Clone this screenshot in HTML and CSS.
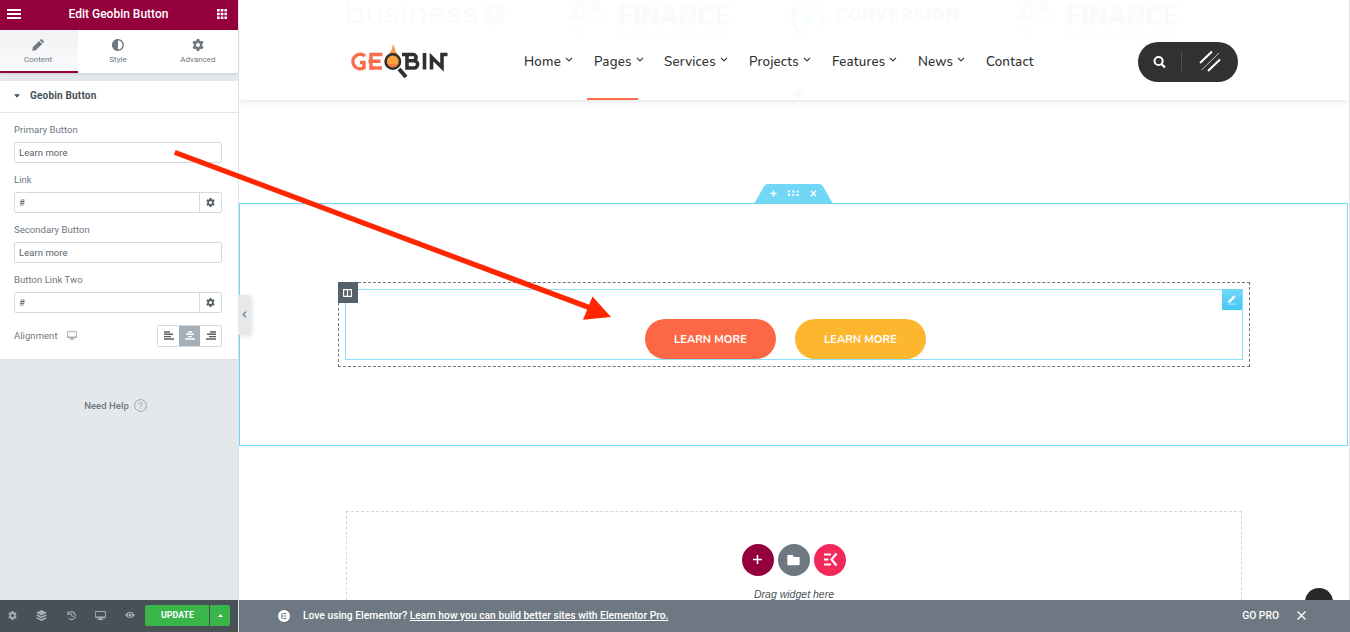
FILE: index.html
```html
<!DOCTYPE html>
<html lang="en">
<head>
<meta charset="utf-8">
<title>Edit Geobin Button</title>
<link rel="stylesheet" href="styles.css">
</head>
<body>
<svg width="0" height="0" class="defs">
  <symbol id="gear" viewBox="0 0 16 16"><path fill-rule="evenodd" d="M6.3 0h3.4l.5 2.3 1.2.7 2.3-.8 1.7 3-1.8 1.6v2.4l1.8 1.6-1.7 3-2.3-.8-1.2.7-.5 2.3H6.300l-.5-2.300-1.200-.7-2.300.8-1.700-3 1.800-1.600V6.800L.6 5.200l1.700-3 2.300.8 1.200-.7zM8 5.300a2.700 2.700 0 1 0 0 5.400 2.700 2.700 0 0 0 0-5.400z"/></symbol>
  <symbol id="monitor" viewBox="0 0 12 10"><path fill-rule="evenodd" d="M1 0h10a1 1 0 0 1 1 1v6a1 1 0 0 1-1 1H7.500l.3 1H9v1H3V9h1.200l.3-1H1a1 1 0 0 1-1-1V1a1 1 0 0 1 1-1zM1 1v5.200h10V1z"/></symbol>
  <symbol id="chev" viewBox="0 0 8 5"><path d="M1 .8 4 3.900 7 .8" fill="none" stroke="#333" stroke-width="1.100"/></symbol>
  <symbol id="disc" viewBox="0 0 36 40"><path d="M1 19Q1 6 10 0h16q7 5 9 13-6-4-9 0-8 5-13-1 1-6 11-6-14-3-16 7 0 4 5 4h21l1 3z" fill="#fafdfc"/><path d="M3 27h10q-1 7 3 12Q6 37 3 27z" fill="#fefdfb"/></symbol>
</svg>
<aside class="panel">
  <header class="panel-head">
    <svg width="14" height="10" viewBox="0 0 14 10"><path d="M0 1h14M0 5h14M0 9h14" stroke="#fff" stroke-width="1.800"/></svg>
    <span class="panel-title">Edit Geobin Button</span>
    <svg width="10" height="10" viewBox="0 0 10 10"><path d="M0 1.300h10M0 5h10M0 8.700h10" stroke="#fff" stroke-width="2.500" stroke-dasharray="2.700 1"/></svg>
  </header>
  <nav class="tabs">
    <div class="tab tab-on"><svg width="12" height="12" viewBox="0 0 16 16"><path d="M1 11 9.500 2.500l4 4L5 15l-4.500.500zM10.500 1.500l1-1q1-.8 2 0L15.500 2.500q.8 1 0 2l-1 1z"/></svg><span>Content</span></div>
    <div class="tab"><svg width="12" height="12" viewBox="0 0 12 12"><circle cx="6" cy="6" r="5.200" fill="none" stroke="#6d7882" stroke-width="1.400"/><path d="M6 0a6 6 0 0 0 0 12z"/></svg><span>Style</span></div>
    <div class="tab"><svg width="12" height="12"><use href="#gear"/></svg><span>Advanced</span></div>
  </nav>
  <section class="controls">
    <h2 class="section-title"><svg width="6" height="4" viewBox="0 0 6 4"><path d="M0 .3h6L3 3.800z" fill="#495157"/></svg>Geobin Button</h2>
    <div class="fields">
      <label class="label">Primary Button</label>
      <div class="input">Learn more</div>
      <label class="label">Link</label>
      <div class="input"><span class="grow">#</span><span class="addon"><svg width="9" height="9"><use href="#gear"/></svg></span></div>
      <label class="label">Secondary Button</label>
      <div class="input">Learn more</div>
      <label class="label">Button Link Two</label>
      <div class="input"><span class="grow">#</span><span class="addon"><svg width="9" height="9"><use href="#gear"/></svg></span></div>
      <div class="align-row">
        <span class="align-label">Alignment</span>
        <svg class="device" width="10" height="9"><use href="#monitor"/></svg>
        <div class="choices">
          <span class="choice"><svg width="10" height="9" viewBox="0 0 10 9"><path d="M0 1h6M0 3.300h9M0 5.600h7M0 8h10" stroke="#556068" stroke-width="1.400"/></svg></span>
          <span class="choice choice-on"><svg width="10" height="9" viewBox="0 0 10 9"><path d="M3 1h4M1 3.300h8M3 5.600h4M0 8h10" stroke="#fff" stroke-width="1.400"/></svg></span>
          <span class="choice"><svg width="10" height="9" viewBox="0 0 10 9"><path d="M4 1h6M1 3.300h9M3 5.600h7M0 8h10" stroke="#556068" stroke-width="1.400"/></svg></span>
        </div>
      </div>
    </div>
  </section>
  <div class="help">Need Help<svg width="13" height="13" viewBox="0 0 13 13"><circle cx="6.500" cy="6.500" r="5.900" fill="none" stroke="#9ba4ac"/><path d="M4.800 5.200Q4.900 3.500 6.500 3.500t1.700 1.500Q8.200 6 6.500 6.800v1" fill="none" stroke="#9ba4ac"/><path d="M6 8.800h1v1H6z" fill="#9ba4ac"/></svg></div>
  <footer class="panel-foot">
    <svg width="9" height="9"><use href="#gear"/></svg>
    <svg width="11" height="11" viewBox="0 0 12 12"><path d="m6 0 6 3-6 3-6-3zM1.500 5 6 7.200 10.500 5 12 6 6 9 0 6zM1.500 8 6 10.200 10.500 8 12 9l-6 3-6-3z"/></svg>
    <svg width="9" height="9" viewBox="0 0 10 10"><path d="M1.700 2.300A4.300 4.300 0 1 1 2 8.300M1 .5v3h3M5.200 2.800v2.600L7 6.500" fill="none" stroke="#a4afb7" stroke-width="1.200"/></svg>
    <svg width="11" height="9"><use href="#monitor"/></svg>
    <svg width="10" height="8" viewBox="0 0 12 8"><path fill-rule="evenodd" d="M0 4q6-8 12 0-6 8-12 0zm3.200 0a2.800 2.800 0 1 0 5.600 0 2.800 2.800 0 0 0-5.600 0z"/><circle cx="6" cy="4" r="1.800"/></svg>
    <span class="update">UPDATE</span>
    <span class="update-more"><svg width="5" height="3" viewBox="0 0 5 3"><path d="M0 3 2.500 0 5 3z" fill="#fff"/></svg></span>
  </footer>
</aside>

<main class="preview">
  <div class="canvas">
    <header class="site-head">
      <svg class="ghosts" width="1111" height="100" viewBox="239 0 1111 100">
        <g fill="#fafafb">
          <text x="345" y="23" font-size="31" font-family="Nunito, sans-serif" textLength="134" lengthAdjust="spacingAndGlyphs">business</text>
          <circle cx="494" cy="14" r="11" fill="#f9fcfd"/><path d="M494 8v12M488 14h12" stroke="#fff" stroke-width="3"/>
          <g font-weight="700" font-family="Roboto, sans-serif"><text x="618" y="25" font-size="28" textLength="112" lengthAdjust="spacingAndGlyphs">FINANCE</text><text x="1066" y="25" font-size="28" textLength="112" lengthAdjust="spacingAndGlyphs">FINANCE</text></g>
          <text x="835" y="21" font-size="18" font-weight="700" font-family="Roboto, sans-serif" textLength="124">CONVERSION</text>
          <g fill="#fbfdfd" font-size="7.500" font-weight="700" font-family="Roboto, sans-serif"><text x="618" y="37.500" textLength="111" lengthAdjust="spacingAndGlyphs">SLOGAN GOES HERE</text><text x="1066" y="37.500" textLength="111" lengthAdjust="spacingAndGlyphs">SLOGAN GOES HERE</text></g>
        </g>
        <use href="#disc" x="569" y="0" width="36" height="40"/><use href="#disc" x="1017" y="0" width="36" height="40"/>
        <path d="M791 9q-4 20 16 30-9-10-12-20 1-8 6-11-6-2-10 1z" fill="#fafcfc"/><path d="M795 4q14-9 28 4 6 12-2 22 2-16-8-23-8-4-18-3z" fill="#fefdfb"/><circle cx="808" cy="19" r="6" fill="#fafdfd"/>
        <circle cx="799" cy="94" r="4.500" fill="#f9f9fa"/>
      </svg>
      <svg class="logo" width="99" height="36" viewBox="350 44 99 36">
        <g fill="none" stroke-width="3.400">
          <path d="M365 56a7.300 7.300 0 1 0-1 11.800v-5.300h-4" stroke="#fb6c4b"/>
          <path d="M382.500 54.500H371v13.500h11M368.500 61.200h12" stroke="#fb6c4b"/>
          <path d="M402 54.500h11a3 3 0 0 1 0 6.200H407h7a3.400 3.400 0 0 1 0 7.300H407V54M424.500 53v16.500M431.500 69.500V57l10.500 10.500V54.500h5.500" stroke="#303030" stroke-width="3.600"/>
        </g>
        <path d="M388 57c1-5 5-6 4.500-12.500 3 3 2 5 4 8l2 4z" fill="#fa9a48"/>
        <circle cx="392.800" cy="61.500" r="7.200" fill="#fba33d" stroke="#303030" stroke-width="2.600"/><path d="M388 64a5.500 5.500 0 0 0 10 0z" fill="#fb7a3c"/>
        <path d="m399 69 7 8" stroke="#303030" stroke-width="4"/>
      </svg>
      <nav class="menu">
        <a class="m-home"><span>Home</span><svg width="8" height="5"><use href="#chev"/></svg></a>
        <a class="m-pages current"><span>Pages</span><svg width="8" height="5"><use href="#chev"/></svg></a>
        <a class="m-services"><span>Services</span><svg width="8" height="5"><use href="#chev"/></svg></a>
        <a class="m-projects"><span>Projects</span><svg width="8" height="5"><use href="#chev"/></svg></a>
        <a class="m-features"><span>Features</span><svg width="8" height="5"><use href="#chev"/></svg></a>
        <a class="m-news"><span>News</span><svg width="8" height="5"><use href="#chev"/></svg></a>
        <a class="m-contact"><span>Contact</span></a>
      </nav>
      <div class="pill">
        <svg width="100" height="40" viewBox="0 0 100 40"><circle cx="20.600" cy="19" r="4.100" fill="none" stroke="#fff" stroke-width="2"/><path d="m23.500 22 3.500 3.500" stroke="#fff" stroke-width="2.200"/><path d="M43.500 9v20" stroke="#53514f"/><g stroke="#fff"><path d="M62 21 74 9.500M70 29l12-11.500" stroke-width="2"/><path d="M63.500 28 81 11" stroke-width="1" stroke="#c5c4c2"/></g></svg>
      </div>
    </header>

    <section class="el-section">
      <div class="handle"><svg width="79" height="20" viewBox="0 0 79 20"><path d="M9 4q2-4 5-4h51q3 0 5 4l9 16H0z" fill="#71d7f7"/><g stroke="#fff" stroke-width="1.300" fill="none"><path d="M16.500 9.500h6M19.500 6.500v6M57 6.700l5 5.600M62 6.700l-5 5.600"/><path d="M34 7.500h11M34 11h11" stroke-width="2" stroke-dasharray="2 2.300"/></g></svg></div>
      <div class="column">
        <div class="widget">
          <span class="edit-icon"><svg width="10" height="10" viewBox="0 0 10 10"><path d="m1 8 .5-2.200 5-5L8.200 2.500l-5 5zM7 .5l1-.3L9 1.200 8.500 2z" fill="#fff"/><path d="M1 9h8" stroke="#a8e7fb"/></svg></span>
          <a class="btn btn-primary">LEARN MORE</a><a class="btn btn-second">LEARN MORE</a>
        </div>
        <span class="col-icon"><svg width="9" height="8" viewBox="0 0 9 8"><path d="M.6.600h7.800v6.800H.6zM4.500.6v6.800" fill="none" stroke="#fff" stroke-width="1.100"/></svg></span>
      </div>
    </section>

    <section class="dropzone">
      <div class="adders">
        <span class="adder add"><svg width="32" height="32"><path d="M11 15.500h9M15.500 11v9" stroke="#fff" stroke-width="1.600"/></svg></span>
        <span class="adder folder"><svg width="32" height="32"><path d="M10.500 11h4l1.500 2h4.500q1.200 0 1.200 1.200V20q0 1.200-1.200 1.200h-10Q9.300 21.200 9.300 20v-7.800Q9.300 11 10.500 11z" fill="#fff"/></svg></span>
        <span class="adder kit"><svg width="32" height="32"><path d="M10 10.500h7M10 15.500h4.500M10 20.500h7M22.500 9.500 17.500 15.500l5 6" fill="none" stroke="#fff" stroke-width="2.200"/></svg></span>
      </div>
      <div class="drag">Drag widget here</div>
    </section>
    <span class="to-top"></span>
  </div>
  <footer class="promo">
    <svg width="12" height="12" viewBox="0 0 12 12"><circle cx="6" cy="6" r="6" fill="#fff"/><path d="M4 3v6M5.500 3.500h3M5.500 6h3M5.500 8.500h3" stroke="#6d7882" stroke-width="1.100"/></svg>
    <span class="promo-text">Love using Elementor? <u>Learn how you can build better sites with Elementor Pro.</u></span>
    <span class="gopro">GO PRO</span>
    <svg class="close" width="9" height="9" viewBox="0 0 9 9"><path d="m.5.500 8 8M8.500.500l-8 8" stroke="#fff" stroke-width="1.300"/></svg>
  </footer>
</main>
<span class="collapse"><svg width="5" height="7" viewBox="0 0 5 7"><path d="M4 .7 1.200 3.500 4 6.300" fill="none" stroke="#6d7882" stroke-width="1.200"/></svg></span>
<svg class="arrow" width="440" height="175" viewBox="173 147 440 175"><path d="m174.800 152.400 415.700 155.600" stroke="#ff2600" stroke-width="5.200"/><path d="m592.500 296.500 18.500 20.500-28 2.800z" fill="#ff2600"/></svg>
</body>
</html>
```
FILE: styles.css
```css
* { box-sizing: border-box; }
body { margin: 0; width: 1350px; height: 632px; display: flex; overflow: hidden; position: relative; background: #fff; font-family: Roboto, sans-serif; color: #556068; }
svg { display: block; flex: none; }
.defs { position: absolute; }

.panel { width: 239px; display: flex; flex-direction: column; background: #e5e8eb; border-right: 1px solid #e0e3e6; z-index: 1; }
.panel-head { height: 30px; background: #93003c; display: flex; align-items: center; justify-content: space-between; padding: 0 11px 2px 7px; color: #fff; }
.panel-title { font-size: 12px; font-weight: 500; padding-right: 1px; }
.tabs { height: 43px; display: flex; background: #fff; fill: #6d7882; box-shadow: 0 1px 3px rgba(0,0,0,.1); font-size: 8px; color: #6d7882; }
.tab { width: 80px; display: flex; flex-direction: column; align-items: center; gap: 3px; padding-top: 9px; }
.tab span { line-height: 12px; }
.tab-on { width: 78px; padding-right: 2px; background: linear-gradient(#f1f2f4, #fbfbfc); border-bottom: 2px solid #93003c; }
.controls { margin-top: 8px; background: #fff; height: 279px; border-bottom: 1px solid #dfe2e5; }
.section-title { margin: 0; height: 32px; border-bottom: 1px solid #e3e6e9; display: flex; align-items: center; gap: 10px; padding: 0 0 2px 14px; font-size: 10px; font-weight: 700; letter-spacing: .18px; color: #495157; }
.fields { padding: 0 16px 0 14px; font-size: 9.500px; color: #6d7882; letter-spacing: .05px; }
.label { display: block; height: 29px; padding-top: 10px; line-height: 14px; }
.input { height: 21px; border: 1px solid #d5dadf; border-radius: 2px; padding-left: 4px; display: flex; align-items: center; color: #556068; }
.grow { flex: 1; }
.addon { width: 22px; height: 19px; border-left: 1px solid #d5dadf; display: grid; place-items: center; fill: #556068; }
.align-row { height: 45px; display: flex; align-items: center; }
.align-label { width: 53px; }
.device { fill: #a4afb7; }
.choices { margin-left: auto; display: flex; border: 1px solid #d5dadf; border-radius: 2px; height: 22px; overflow: hidden; }
.choice { width: 21px; display: grid; place-items: center; }
.choice-on { background: #a4afb7; }
.help { margin-top: 38px; display: flex; justify-content: center; align-items: center; gap: 5px; padding-right: 7px; font-size: 9.500px; font-weight: 500; letter-spacing: .05px; color: #6d7882; height: 14px; }
.panel-foot { margin-top: auto; height: 32px; background: #495157; display: flex; align-items: center; padding: 0 7px 2px 8px; fill: #a4afb7; gap: 19.300px; }
.update { margin-left: -9px; width: 64px; height: 21px; background: #39b54a; border-radius: 2px 0 0 2px; color: #fff; font-size: 8.800px; font-weight: 700; display: grid; place-items: center; }
.update-more { margin-left: -18.300px; width: 20px; height: 21px; background: #39b54a; border-radius: 0 2px 2px 0; display: grid; place-items: center; }

.preview { width: 1111px; display: flex; flex-direction: column; }
.canvas { height: 600px; overflow: hidden; position: relative; border-right: 1px solid #e4e4e4; }
.site-head { height: 100px; position: relative; display: flex; box-shadow: 0 1px 7px rgba(0,0,0,.12); background: #fff; padding-left: 111px; }
.ghosts { position: absolute; left: 0; top: 0; }
.logo { margin-top: 44px; position: relative; }
.menu { margin-left: 75px; display: flex; position: relative; width: 614px; font-family: Nunito, "Open Sans", sans-serif; font-size: 13.300px; font-weight: 500; letter-spacing: .2px; color: #303030; }
.menu a { display: flex; gap: 4px; height: 100px; padding-top: 52px; line-height: 20px; white-space: nowrap; }
.menu svg { margin-top: 5px; }
.m-home { width: 70px; }
.m-pages { width: 70px; position: relative; }
.m-services { width: 85px; }
.m-projects { width: 83px; }
.m-features { width: 86px; }
.m-news { width: 68px; }
.current::after { content: ""; position: absolute; left: -7px; bottom: 0; width: 51px; height: 2px; background: #ff6b4a; }
.pill { margin-top: 42px; width: 100px; height: 40px; background: #33312f; border-radius: 20px; position: relative; }

.el-section { position: relative; margin-top: 103px; width: 1109px; height: 243px; border: 1px solid #71d7f7; padding: 78px 97px 0 98px; }
.handle { position: absolute; left: 514px; top: -20px; }
.column { position: relative; height: 85px; border: 1px dashed #6d7882; padding: 6px; }
.col-icon { position: absolute; left: -1px; top: -1px; width: 20px; height: 21px; padding-right: 1px; background: #556068; display: grid; place-items: center; }
.widget { position: relative; height: 71px; border: 1px solid #8ae0f8; display: flex; justify-content: center; gap: 19px; padding: 29px 18px 0 0; }
.edit-icon { position: absolute; right: 0; top: -1px; width: 20px; height: 21px; background: linear-gradient(#71d7f7, #45c8f0); display: grid; place-items: center; }
.btn { width: 131px; height: 40px; border-radius: 20px; color: #fff; font: 700 11px/42px Nunito, "Open Sans", sans-serif; letter-spacing: .1px; text-align: center; padding-left: 1px; }
.btn-primary { background: #fc6845; }
.btn-second { background: #fdb72f; }

.dropzone { margin: 65px 0 0 107px; width: 896px; height: 160px; border: 1px dashed #d5d8db; padding-top: 32px; }
.adders { display: flex; gap: 4px; justify-content: center; }
.adder { width: 32px; height: 32px; border-radius: 50%; }
.add { background: #93003c; }
.folder { background: #6d7882; }
.kit { background: #f3295c; }
.drag { margin-top: 10px; text-align: center; font: italic 10.500px/16px "Liberation Sans", sans-serif; color: #495157; }
.to-top { position: absolute; left: 1066px; top: 588px; width: 28px; height: 28px; border-radius: 50%; background: #282828; }
.promo { height: 32px; background: #6d7882; color: #fff; display: flex; align-items: center; padding: 0 44px 1px 39px; font-size: 10.300px; font-weight: 500; }
.promo-text { margin-left: 13px; }
.gopro { margin-left: auto; }
.close { margin-left: 18px; }
.collapse { position: absolute; z-index: 2; left: 238px; top: 295px; width: 12px; height: 40px; background: #e6e9ec; border-radius: 0 3px 3px 0; box-shadow: 2px 1px 4px rgba(0,0,0,.12); display: grid; place-items: center; padding-bottom: 1px; }
.arrow { position: absolute; z-index: 3; left: 173px; top: 147px; }
```
